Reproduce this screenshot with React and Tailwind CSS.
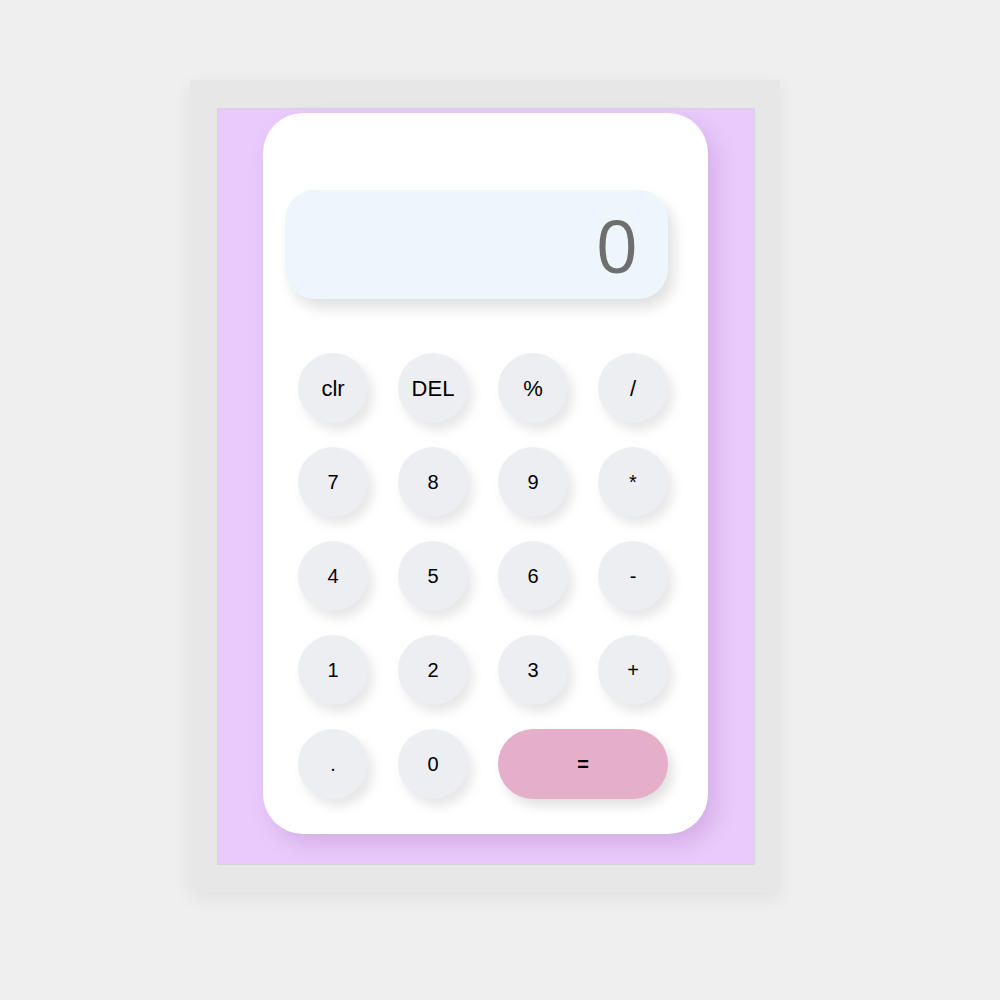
import React from "react"

const rows = [
  ["clr", "DEL", "%", "/"],
  ["7", "8", "9", "*"],
  ["4", "5", "6", "-"],
  ["1", "2", "3", "+"],
]

function Key({ label, big }) {
  return (
    <button
      className={
        "w-[70px] h-[70px] rounded-full bg-[#eceef2] text-black flex items-center justify-center shadow-[5px_7px_12px_rgba(0,0,0,0.10),-3px_-3px_8px_rgba(255,255,255,0.9)] " +
        (big ? "text-[22px]" : "text-[20px]")
      }
    >
      {label}
    </button>
  )
}

export default function App() {
  return (
    <div
      className="w-[1000px] h-[1000px] bg-[#efefef] pt-[80px] pl-[190px]"
      style={{ fontFamily: '"Liberation Sans", Arial, sans-serif' }}
    >
      {/* frame */}
      <div className="w-[590px] h-[812px] bg-[#e7e7e7] pt-[28px] pl-[27px] shadow-[0_6px_18px_rgba(0,0,0,0.06)]">
        <div className="w-[538px] h-[757px] bg-[#eacafc] border border-[#d9d3dc] pt-[4px] pl-[45px]">
          {/* calculator body */}
          <div className="w-[445px] h-[721px] bg-white rounded-[40px] shadow-[8px_10px_22px_rgba(110,50,140,0.18)] pt-[77px]">
            <div className="ml-[22px] w-[383px] h-[109px] rounded-[30px] bg-[#ecf6fb] flex items-center justify-end pr-[30px] shadow-[6px_9px_14px_rgba(0,0,0,0.12),-6px_-6px_14px_rgba(255,255,255,0.9)]">
              <span
                className="text-[74px] leading-none text-[#6e6e6e]"
                style={{ fontFamily: '"Open Sans", sans-serif' }}
              >
                0
              </span>
            </div>

            <div className="mt-[54px] pl-[35px] grid grid-cols-[repeat(4,70px)] gap-x-[30px] gap-y-[24px]">
              {rows.map((row, r) =>
                row.map((k) => <Key key={k} label={k} big={r === 0} />)
              )}
              <Key label="." />
              <Key label="0" />
              <button className="col-span-2 h-[70px] rounded-full bg-[#e5afc9] text-black text-[20px] font-bold flex items-center justify-center shadow-[5px_7px_12px_rgba(0,0,0,0.12)]">
                =
              </button>
            </div>
          </div>
        </div>
      </div>
    </div>
  )
}
